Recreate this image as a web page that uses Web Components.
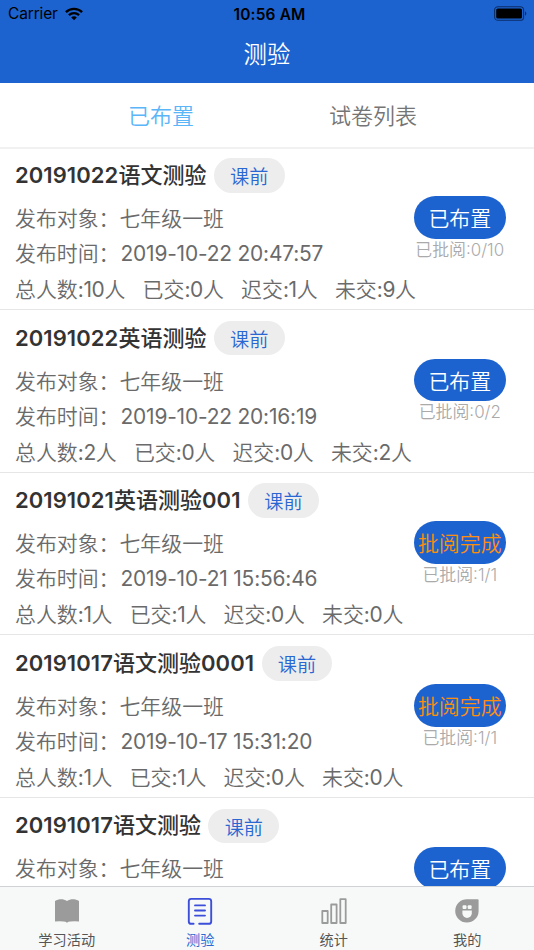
<!DOCTYPE html>
<html lang="zh-CN">
<head>
<meta charset="utf-8">
<title>测验</title>
<style>
  body {
    margin: 0;
    width: 534px;
    height: 950px;
    overflow: hidden;
    background: #fff;
    font-family: Inter, "Noto Sans CJK SC", sans-serif;
  }
</style>
</head>
<body>
<quiz-app></quiz-app>

<script>
// small helper, every element gets an open shadow root from a template
function render(el, html) {
  const template = document.createElement('template');
  template.innerHTML = html;
  el.attachShadow({ mode: 'open' });
  el.shadowRoot.appendChild(template.content.cloneNode(true));
}

class StatusBar extends HTMLElement {
  constructor() {
    super();
    render(this, `
      <style>
        :host {
          display: grid;
          grid-template-columns: 1fr auto 1fr;
          align-items: center;
          height: 27px;
          padding: 0 7px 0 8px;
          color: #000;
          font-size: 15.5px;
        }
        .left { display: flex; align-items: center; gap: 7px; letter-spacing: -0.15px; }
        .time { font-weight: 600; letter-spacing: 0.15px; padding: 1px 0 0 4px; }
        .battery { justify-self: end; }
        svg { display: block; }
      </style>
      <div class="left">
        <span>Carrier</span>
        <svg width="18" height="14" viewBox="0 0 18 14" fill="none" stroke="#000" stroke-width="2.3">
          <path d="M0.9 5.1C5.4 0.7 12.6 0.7 17.1 5.1"/>
          <path d="M3.9 8.1C6.8 5.4 11.2 5.4 14.1 8.1"/>
          <path d="M9 13.2L6.2 10.4C7.8 9 10.2 9 11.8 10.4Z" fill="#000" stroke="none"/>
        </svg>
      </div>
      <span class="time">10:56 AM</span>
      <svg class="battery" width="33" height="15" viewBox="0 0 33 15">
        <rect x="0.6" y="0.7" width="29" height="13.6" rx="3.4" fill="none" stroke="#0b2e68" stroke-width="1.1"/>
        <rect x="2.2" y="2.5" width="25.8" height="10" rx="1.6"/>
        <path d="M31 5.3C32.8 6 32.8 9 31 9.7Z" fill="#0b2e68"/>
      </svg>
    `);
  }
}

class NavHeader extends HTMLElement {
  constructor() {
    super();
    render(this, `
      <style>
        :host { display: block; flex: none; height: 82.7px; background: #1d63cf; color: #fff; }
        h1 {
          margin: 0;
          height: 54px;
          line-height: 56px;
          text-align: center;
          font-size: 23.4px;
          font-weight: 350;
        }
      </style>
      <status-bar></status-bar>
      <h1><slot></slot></h1>
    `);
  }
}

class SegmentTabs extends HTMLElement {
  constructor() {
    super();
    render(this, `
      <style>
        :host {
          display: grid;
          grid-template-columns: 212px 212px;
          justify-content: center;
          flex: none;
          box-sizing: border-box;
          height: 66px;
          line-height: 67px;
          border-bottom: 2px solid #f1f1f1;
          text-align: center;
          font-size: 22px;
          font-weight: 350;
          color: #757575;
        }
        ::slotted([selected]) { color: #5bb6f8; }
      </style>
      <slot></slot>
    `);
  }
}

class QuizCard extends HTMLElement {
  constructor() {
    super();
    const a = name => this.getAttribute(name);
    const time = a('time');
    const checked = a('checked');
    render(this, `
      <style>
        :host {
          display: block;
          box-sizing: border-box;
          flex: none;
          height: 162.6px;
          padding: 10.7px 28.5px 0 15px;
          border-bottom: 1px solid #e6e6e6;
          font-size: 20.9px;
          font-weight: 350;
          color: #6a6a6a;
        }
        .head { display: flex; align-items: center; gap: 7.5px; height: 34.6px; }
        .name { font-size: 22px; line-height: 32px; font-weight: 500; color: #333; margin-top: -1px; white-space: nowrap; }
        .name i { font-style: normal; font-weight: 600; letter-spacing: 0.07px; }
        .tag {
          box-sizing: border-box;
          width: 70.7px;
          height: 34.6px;
          line-height: 36.6px;
          padding-top: 1px;
          border-radius: 18px;
          background: #ededed;
          color: #2967d3;
          text-align: center;
          font-size: 19.2px;
          font-weight: 350;
        }
        .body { display: flex; justify-content: space-between; margin-top: 8.1px; height: 70px; }
        .line { line-height: 35px; white-space: nowrap; }
        .date { margin-left: 1px; font-weight: 385; letter-spacing: -0.17px; }
        .side { width: 91.5px; margin-top: -4.7px; text-align: center; }
        .state {
          height: 42.5px;
          line-height: 45px;
          border-radius: 22px;
          background: #1d63cf;
          color: #fff;
          white-space: nowrap;
        }
        :host([done]) .state { color: #ff8e0f; }
        .checked { font-size: 16.9px; line-height: 23px; color: #aaa; white-space: nowrap; }
        .stats { display: flex; gap: 17.2px; line-height: 37.6px; white-space: nowrap; }
        .stats i { font-style: normal; font-weight: 385; letter-spacing: -0.3px; }
      </style>
      <div class="head">
        <div class="name">${a('name').replace(/\d+/g, '<i>$&</i>')}</div>
        <div class="tag">课前</div>
      </div>
      <div class="body">
        <div>
          <div class="line">发布对象：七年级一班</div>
          ${time ? `<div class="line">发布时间：<span class="date">${time}</span></div>` : ''}
        </div>
        <div class="side">
          <div class="state">${this.hasAttribute('done') ? '批阅完成' : '已布置'}</div>
          ${checked ? `<div class="checked">已批阅:${checked}</div>` : ''}
        </div>
      </div>
      <div class="stats"></div>
    `);

    if (a('counts')) {
      const labels = ['总人数', '已交', '迟交', '未交'];
      this.shadowRoot.querySelector('.stats').innerHTML = a('counts').split(',')
        .map((n, i) => `<span>${labels[i]}<i>:${n}</i>人</span>`)
        .join('');
    }
  }
}

class TabItem extends HTMLElement {
  constructor() {
    super();
    render(this, `
      <style>
        :host {
          display: flex;
          flex-direction: column;
          align-items: center;
          padding-top: 9px;
          font-size: 14.2px;
          line-height: 20px;
          color: #555;
        }
        :host([active]) { color: #2b69d4; }
        .icon { width: 32px; height: 32px; margin-bottom: 2px; }
      </style>
      <div class="icon"><slot name="icon"></slot></div>
      <slot name="label"></slot>
    `);
  }
}

class TabBar extends HTMLElement {
  constructor() {
    super();
    render(this, `
      <style>
        :host {
          display: grid;
          grid-template-columns: repeat(4, 1fr);
          flex: none;
          box-sizing: border-box;
          height: 64px;
          border-top: 1px solid #d0d3d6;
          background: #f7f9f9;
        }
        svg { display: block; }
      </style>
      <tab-item>
        <svg slot="icon" width="32" height="32" viewBox="0 0 32 32" fill="#9b9b9b">
          <path d="M4 5C7.5 2.800 12.5 2.700 16 5C19.5 2.700 24.500 2.800 28 5V25.600Q24 24.800 19.500 25.500Q17.200 25.600 16 26.800Q14.800 25.600 12.500 25.500Q8 24.800 4 25.600Z"/>
        </svg>
        <span slot="label">学习活动</span>
      </tab-item>
      <tab-item active>
        <svg slot="icon" width="32" height="32" viewBox="0 0 32 32" fill="none" stroke="#3d4fd9" stroke-width="1.900" stroke-linecap="round">
          <path d="M9.600 27.800H7.200Q4.800 27.800 4.800 25.400V5.300Q4.800 2.900 7.200 2.900H24.800Q27.200 2.900 27.200 5.300V25.400Q27.200 27.800 24.800 27.800H15.200"/>
          <path d="M11 9.400H21M11 14.500H21M11 19.600H21"/>
        </svg>
        <span slot="label">测验</span>
      </tab-item>
      <tab-item>
        <svg slot="icon" width="32" height="32" viewBox="0 0 32 32" fill="none" stroke="#9b9b9b" stroke-width="1.800" stroke-linejoin="round">
          <rect x="4.300" y="15" width="5.400" height="12"/>
          <rect x="13.200" y="8.500" width="5.400" height="18.500"/>
          <rect x="22.300" y="3.200" width="5.400" height="23.800"/>
        </svg>
        <span slot="label">统计</span>
      </tab-item>
      <tab-item>
        <svg slot="icon" width="32" height="32" viewBox="0 0 32 32" fill="#9b9b9b">
          <path d="M16 3.200H26.700Q27.600 3.200 27.600 4.100V15.200A11.700 11.700 0 1 1 16 3.200Z"/>
          <g fill="#f7f9f9">
            <rect x="11.600" y="9.300" width="3.900" height="3.600" rx="0.900"/>
            <rect x="16.700" y="9.300" width="3.900" height="3.600" rx="0.900"/>
            <path d="M11.400 14.400H20.800V17.200A4.700 4.700 0 0 1 11.400 17.200Z"/>
          </g>
        </svg>
        <span slot="label">我的</span>
      </tab-item>
    `);
  }
}

class QuizApp extends HTMLElement {
  constructor() {
    super();
    render(this, `
      <style>
        :host { display: flex; flex-direction: column; height: 950px; }
        .list { display: flex; flex-direction: column; flex: 1; min-height: 0; overflow: hidden; }
        .list quiz-card:first-child { margin-top: -1.1px; }
      </style>
      <nav-header>测验</nav-header>
      <segment-tabs>
        <span selected>已布置</span>
        <span>试卷列表</span>
      </segment-tabs>
      <div class="list">
        <quiz-card name="20191022语文测验" time="2019-10-22 20:47:57" checked="0/10" counts="10,0,1,9"></quiz-card>
        <quiz-card name="20191022英语测验" time="2019-10-22 20:16:19" checked="0/2" counts="2,0,0,2"></quiz-card>
        <quiz-card name="20191021英语测验001" time="2019-10-21 15:56:46" checked="1/1" counts="1,1,0,0" done></quiz-card>
        <quiz-card name="20191017语文测验0001" time="2019-10-17 15:31:20" checked="1/1" counts="1,1,0,0" done></quiz-card>
        <quiz-card name="20191017语文测验"></quiz-card>
      </div>
      <tab-bar></tab-bar>
    `);
  }
}

customElements.define('status-bar', StatusBar);
customElements.define('nav-header', NavHeader);
customElements.define('segment-tabs', SegmentTabs);
customElements.define('quiz-card', QuizCard);
customElements.define('tab-item', TabItem);
customElements.define('tab-bar', TabBar);
customElements.define('quiz-app', QuizApp);
</script>
</body>
</html>
